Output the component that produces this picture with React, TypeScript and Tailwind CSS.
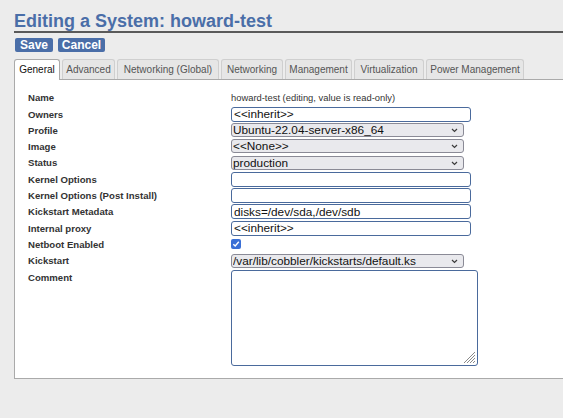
import React from 'react';

const sans = "font-['Liberation_Sans',Arial,sans-serif]";

const tabs = [
    { label: 'General', w: 'w-[46px]', active: true },
    { label: 'Advanced', w: 'w-[53px]' },
    { label: 'Networking (Global)', w: 'w-[102px]' },
    { label: 'Networking', w: 'w-[62px]' },
    { label: 'Management', w: 'w-[67px]' },
    { label: 'Virtualization', w: 'w-[70px]' },
    { label: 'Power Management', w: 'w-[98px]' },
];

function Chevron() {
    return (
        <svg width="7" height="5" viewBox="0 0 7 5" className="pointer-events-none absolute right-[6px] top-[5px]">
            <path d="M1 1 L3.5 3.5 L6 1" fill="none" stroke="#3c3c3c" strokeWidth="1.2" />
        </svg>
    );
}

function TextInput({ value = '' }: { value?: string }) {
    return (
        <input
            readOnly
            value={value}
            className="block h-[15px] w-[240px] rounded-[3px] border border-[#4a6a9c] bg-white px-[2px] text-[11.8px] leading-none text-[#111] outline-none"
        />
    );
}

function Select({ value }: { value: string }) {
    return (
        <div className="relative h-[14px] w-[233px]">
            <select
                defaultValue={value}
                className="block h-[14px] w-full appearance-none rounded-[3px] border border-[#8a8a96] bg-[#e9e9ed] py-0 pl-[1px] pr-[14px] text-[11.8px] leading-[12px] text-[#111] outline-none"
            >
                <option>{value}</option>
            </select>
            <Chevron />
        </div>
    );
}

function Row({ label, h, children }: { label: string; h: string; children?: React.ReactNode }) {
    return (
        <div className={`flex items-center ${h}`}>
            <div className="w-[203px] shrink-0 text-[9.6px] font-bold leading-[11px] text-[#333]">{label}</div>
            {children}
        </div>
    );
}

export default function App() {
    return (
        <div className={`min-h-screen overflow-hidden bg-[#ececec] pt-[11px] ${sans}`}>
            <h1 className="ml-[14px] border-b-2 border-[#5a5a5a] text-[18px] font-bold leading-[20px] text-[#4a6ea8]">
                Editing a System: howard-test
            </h1>

            <div className="ml-[15px] mt-[5px] flex gap-[5px]">
                <button className="h-[14px] w-[38px] rounded-[2px] bg-[#4a6ea8] text-[12px] font-bold leading-[14px] text-white">
                    Save
                </button>
                <button className="h-[14px] w-[47px] rounded-[2px] bg-[#4a6ea8] text-[12px] font-bold leading-[14px] text-white">
                    Cancel
                </button>
            </div>

            <div className="ml-[14px] mt-[7px] flex items-end gap-[2px]">
                {tabs.map((t) =>
                    t.active ? (
                        <div
                            key={t.label}
                            className={`relative z-10 -mb-px h-[21px] ${t.w} rounded-t-[3px] border border-b-0 border-[#aaa] bg-white text-center text-[10px] leading-[19px] text-[#111]`}
                        >
                            {t.label}
                        </div>
                    ) : (
                        <div
                            key={t.label}
                            className={`h-[20px] ${t.w} rounded-t-[3px] border border-b-0 border-[#cfcfcf] bg-[#e6e6e6] text-center text-[10px] leading-[19px] text-[#555]`}
                        >
                            {t.label}
                        </div>
                    )
                )}
            </div>

            <div className="ml-[14px] border-y border-l border-[#aaa] bg-white pb-[12px] pl-[13px] pt-[9px]">
                <Row label="Name" h="h-[17px]">
                    <span className="text-[9.4px] leading-[11px] text-[#333]">howard-test (editing, value is read-only)</span>
                </Row>
                <Row label="Owners" h="h-[16px]">
                    <TextInput value="<<inherit>>" />
                </Row>
                <Row label="Profile" h="h-[16px]">
                    <Select value="Ubuntu-22.04-server-x86_64" />
                </Row>
                <Row label="Image" h="h-[16px]">
                    <Select value="<<None>>" />
                </Row>
                <Row label="Status" h="h-[17px]">
                    <Select value="production" />
                </Row>
                <Row label="Kernel Options" h="h-[16px]">
                    <TextInput />
                </Row>
                <Row label="Kernel Options (Post Install)" h="h-[16px]">
                    <TextInput />
                </Row>
                <Row label="Kickstart Metadata" h="h-[17px]">
                    <TextInput value="disks=/dev/sda,/dev/sdb" />
                </Row>
                <Row label="Internal proxy" h="h-[16px]">
                    <TextInput value="<<inherit>>" />
                </Row>
                <Row label="Netboot Enabled" h="h-[16px]">
                    <span className="flex h-[10px] w-[10px] items-center justify-center rounded-[2px] bg-[#3a6fd6]">
                        <svg width="8" height="8" viewBox="0 0 8 8">
                            <path d="M1.3 4.2 L3.2 6 L6.8 1.8" fill="none" stroke="white" strokeWidth="1.4" />
                        </svg>
                    </span>
                </Row>
                <Row label="Kickstart" h="h-[17px]">
                    <Select value="/var/lib/cobbler/kickstarts/default.ks" />
                </Row>
                <div className="flex items-start">
                    <div className="w-[203px] shrink-0 pt-[3px] text-[9.6px] font-bold leading-[11px] text-[#333]">Comment</div>
                    <div className="relative mt-px h-[96px] w-[247px]">
                        <textarea className="block h-full w-full resize-none rounded-[3px] border border-[#4a6a9c] bg-white outline-none" />
                        <svg width="13" height="13" viewBox="0 0 13 13" className="pointer-events-none absolute bottom-[2px] right-[2px]">
                            <path d="M12 1 L1 12 M12 4 L4 12 M12 7 L7 12 M12 10 L10 12" stroke="#8a8a8a" strokeWidth="1" />
                        </svg>
                    </div>
                </div>
            </div>
        </div>
    );
}
